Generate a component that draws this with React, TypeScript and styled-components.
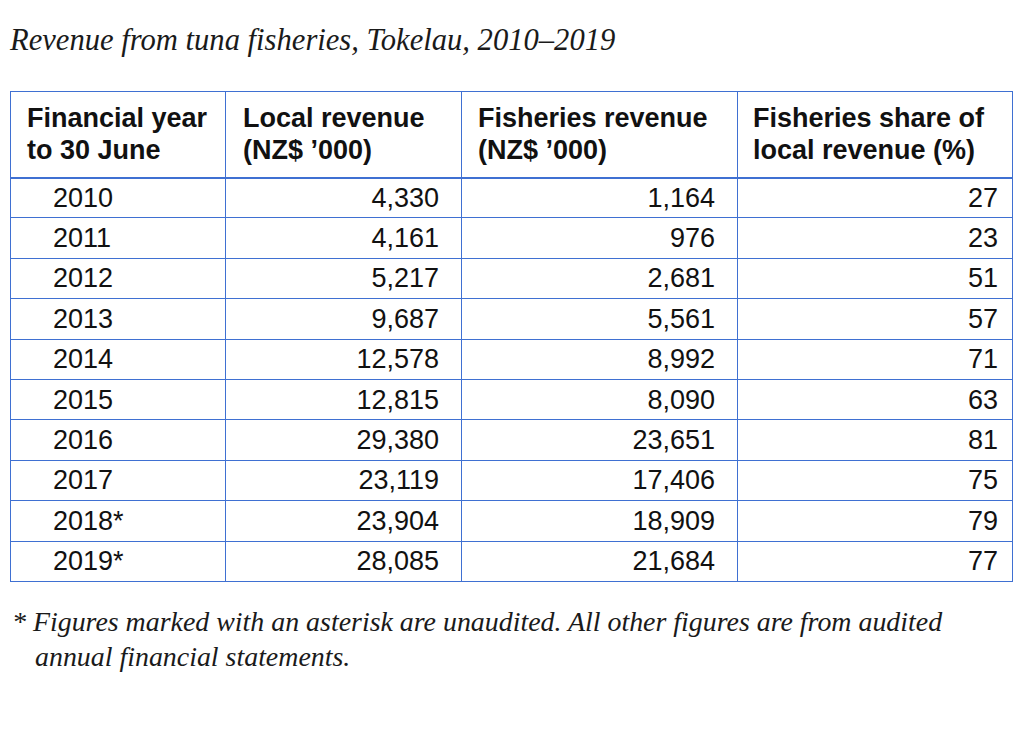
import React from "react";
import styled, { createGlobalStyle } from "styled-components";

const Global = createGlobalStyle`
  html, body { margin: 0; padding: 0; background: #ffffff; }
  body { font-family: "Liberation Sans", Arial, sans-serif; color: #111; }
`;

const Page = styled.div`
  width: 1024px;
  height: 741px;
  padding: 23px 0 0 10px;
  box-sizing: border-box;
  overflow: hidden;
`;

const Title = styled.h1`
  margin: 0;
  font-family: "Liberation Serif", "Times New Roman", serif;
  font-style: italic;
  font-weight: normal;
  font-size: 30.6px;
  line-height: 34px;
  color: #1a1a1a;
`;

const Table = styled.table`
  margin-top: 34px;
  border-collapse: collapse;
  table-layout: fixed;
  width: 1002px;
  font-size: 27px;
  color: #111;
`;

const border = "#3f70d2";

const HeadCell = styled.th<{ $pad: number }>`
  border: 1px solid ${border};
  border-bottom: 2px solid ${border};
  height: 86px;
  padding: 0 8px 0 ${(p) => p.$pad}px;
  text-align: left;
  vertical-align: middle;
  font-weight: bold;
  line-height: 32px;
  box-sizing: border-box;
`;

const Cell = styled.td<{ $align: "left" | "right"; $pad: number }>`
  border: 1px solid ${border};
  height: 40.4px;
  padding: 0 ${(p) => (p.$align === "right" ? p.$pad : 0)}px 0
    ${(p) => (p.$align === "left" ? p.$pad : 0)}px;
  text-align: ${(p) => p.$align};
  vertical-align: middle;
  line-height: 30px;
  box-sizing: border-box;
`;

const Note = styled.p`
  margin: 22px 0 0 2px;
  padding-left: 23px;
  text-indent: -23px;
  width: 940px;
  font-family: "Liberation Serif", "Times New Roman", serif;
  font-style: italic;
  font-size: 27.9px;
  line-height: 35px;
  color: #1a1a1a;
`;

const rows: [string, string, string, string][] = [
  ["2010", "4,330", "1,164", "27"],
  ["2011", "4,161", "976", "23"],
  ["2012", "5,217", "2,681", "51"],
  ["2013", "9,687", "5,561", "57"],
  ["2014", "12,578", "8,992", "71"],
  ["2015", "12,815", "8,090", "63"],
  ["2016", "29,380", "23,651", "81"],
  ["2017", "23,119", "17,406", "75"],
  ["2018*", "23,904", "18,909", "79"],
  ["2019*", "28,085", "21,684", "77"],
];

export default function App() {
  return (
    <Page>
      <Global />
      <Title>Revenue from tuna fisheries, Tokelau, 2010–2019</Title>
      <Table>
        <colgroup>
          <col style={{ width: 215 }} />
          <col style={{ width: 236 }} />
          <col style={{ width: 276 }} />
          <col style={{ width: 275 }} />
        </colgroup>
        <thead>
          <tr>
            <HeadCell $pad={16}>Financial year<br />to 30 June</HeadCell>
            <HeadCell $pad={17}>Local revenue<br />(NZ$ ’000)</HeadCell>
            <HeadCell $pad={16}>Fisheries revenue<br />(NZ$ ’000)</HeadCell>
            <HeadCell $pad={15}>Fisheries share of<br />local revenue (%)</HeadCell>
          </tr>
        </thead>
        <tbody>
          {rows.map((r) => (
            <tr key={r[0]}>
              <Cell $align="left" $pad={42}>{r[0]}</Cell>
              <Cell $align="right" $pad={22}>{r[1]}</Cell>
              <Cell $align="right" $pad={22}>{r[2]}</Cell>
              <Cell $align="right" $pad={14}>{r[3]}</Cell>
            </tr>
          ))}
        </tbody>
      </Table>
      <Note>* Figures marked with an asterisk are unaudited. All other figures are from audited annual financial statements.</Note>
    </Page>
  );
}
